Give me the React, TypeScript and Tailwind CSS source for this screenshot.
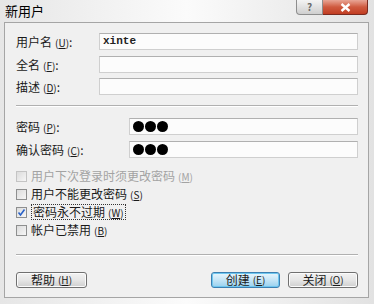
import React from 'react';

const font = { fontFamily: '"Noto Sans CJK SC", "Liberation Sans", sans-serif' };

const Key = ({ k }: { k: string }) => (
  <span className="ml-[3px] text-[10px]">
    (<span className="underline">{k}</span>)
  </span>
);

const Field = ({ label, k, value, inputLeft, mono, dots }: { label: string; k: string; value?: string; inputLeft: number; mono?: boolean; dots?: boolean }) => (
  <div className="flex h-[17px] items-center">
    <div className="shrink-0 text-[12px] leading-none text-[#1a1a1a]" style={{ width: inputLeft }}>
      {label}
      <Key k={k} />:
    </div>
    <div className="flex h-full flex-1 items-center border border-[#cfcfcf] border-t-[#b0b0b0] bg-[#fcfcfc] px-[3px]">
      {mono && (
        <span className="text-[11px] font-bold leading-none text-[#222]" style={{ fontFamily: '"Liberation Mono", monospace' }}>
          {value}
        </span>
      )}
      {dots && (
        <div className="flex gap-[1px] pl-[0px]">
          <span className="h-[11px] w-[11px] rounded-full bg-black" />
          <span className="h-[11px] w-[11px] rounded-full bg-black" />
          <span className="h-[11px] w-[11px] rounded-full bg-black" />
        </div>
      )}
    </div>
  </div>
);

const Check = ({ label, k, checked, disabled, focus }: { label: string; k: string; checked?: boolean; disabled?: boolean; focus?: boolean }) => (
  <div className="flex h-[18px] items-center">
    <div
      className={`mr-[4px] flex h-[11px] w-[11px] items-center justify-center border bg-gradient-to-br from-[#dcdcdc] to-[#f6f6f6] ${
        disabled ? 'border-[#c4c4c4]' : 'border-[#8e8f8f]'
      }`}
    >
      {checked && (
        <svg width="9" height="9" viewBox="0 0 9 9">
          <path d="M1.5 4.5 L3.5 7 L7.5 1.5" fill="none" stroke="#2a62c8" strokeWidth="1.6" />
        </svg>
      )}
    </div>
    <div
      className={`text-[12px] leading-none ${disabled ? 'text-[#a3a3a3]' : 'text-[#1a1a1a]'} ${
        focus ? 'border border-dotted border-[#333] px-[1px] py-[1px]' : ''
      }`}
    >
      {label}
      <Key k={k} />
    </div>
  </div>
);

const Btn = ({ label, k, primary, width }: { label: string; k: string; primary?: boolean; width: number }) => (
  <div
    className={`flex h-[16px] items-center justify-center rounded-[3px] border text-[12px] leading-none text-[#1a1a1a] ${
      primary
        ? 'border-[#3c7fb1] bg-gradient-to-b from-[#eaf6fd] via-[#c4e5f6] to-[#98d1ef] shadow-[inset_0_0_0_1px_#6fc7ef]'
        : 'border-[#707070] bg-gradient-to-b from-[#f2f2f2] via-[#e6e6e6] to-[#cfcfcf] shadow-[inset_0_0_0_1px_#fbfbfb]'
    }`}
    style={{ width }}
  >
    {label}
    <Key k={k} />
  </div>
);

export default function App() {
  return (
    <div
      className="flex h-[304px] w-[374px] flex-col bg-gradient-to-r from-[#e6e6e6] via-[#fbfbfb] to-[#e2e2e2]"
      style={font}
    >
      <div className="relative h-[22px] shrink-0">
        <div className="pl-[5px] pt-[3px] text-[13px] leading-[16px] text-black">新用户</div>
        <div className="absolute right-[6px] top-0 flex h-[15px]">
          <div className="flex w-[27px] items-center justify-center rounded-bl-[4px] border border-t-0 border-[#8d8d8d] bg-gradient-to-b from-[#f4f4f4] to-[#cfcfcf] text-[10px] font-bold leading-none text-[#6a6a6a]">
            ?
          </div>
          <div className="flex w-[45px] items-center justify-center rounded-br-[4px] border border-l-0 border-t-0 border-[#7a2a1f] bg-gradient-to-b from-[#e8a595] via-[#cf5a3f] to-[#c13d22]">
            <svg width="11" height="9" viewBox="0 0 11 9">
              <path d="M1.5 1 L9.5 8 M9.5 1 L1.5 8" stroke="#fff" strokeWidth="2.4" />
            </svg>
          </div>
        </div>
      </div>

      <div className="ml-[4px] mr-[5px] flex h-[276px] flex-col border border-[#a5a5a5] bg-[#f0f0f0] pl-[11px] pr-[10px]">
        <div className="mt-[10px]">
          <Field label="用户名" k="U" value="xinte" mono inputLeft={83} />
        </div>
        <div className="mt-[6px]">
          <Field label="全名" k="F" inputLeft={83} />
        </div>
        <div className="mt-[5px]">
          <Field label="描述" k="D" inputLeft={83} />
        </div>

        <div className="mt-[10px] h-[2px] border-b border-t border-b-white border-t-[#b0b0b0]" />

        <div className="mt-[11px]">
          <Field label="密码" k="P" dots inputLeft={113} />
        </div>
        <div className="mt-[6px]">
          <Field label="确认密码" k="C" dots inputLeft={113} />
        </div>

        <div className="mt-[9px] flex flex-col">
          <Check label="用户下次登录时须更改密码" k="M" disabled />
          <Check label="用户不能更改密码" k="S" />
          <Check label="密码永不过期" k="W" checked focus />
          <Check label="帐户已禁用" k="B" />
        </div>

        <div className="mt-[15px] h-[2px] border-b border-t border-b-white border-t-[#b0b0b0]" />

        <div className="mt-[16px] flex items-center">
          <Btn label="帮助" k="H" width={71} />
          <div className="flex-1" />
          <Btn label="创建" k="E" primary width={69} />
          <div className="w-[8px]" />
          <Btn label="关闭" k="O" width={70} />
        </div>
      </div>
    </div>
  );
}
